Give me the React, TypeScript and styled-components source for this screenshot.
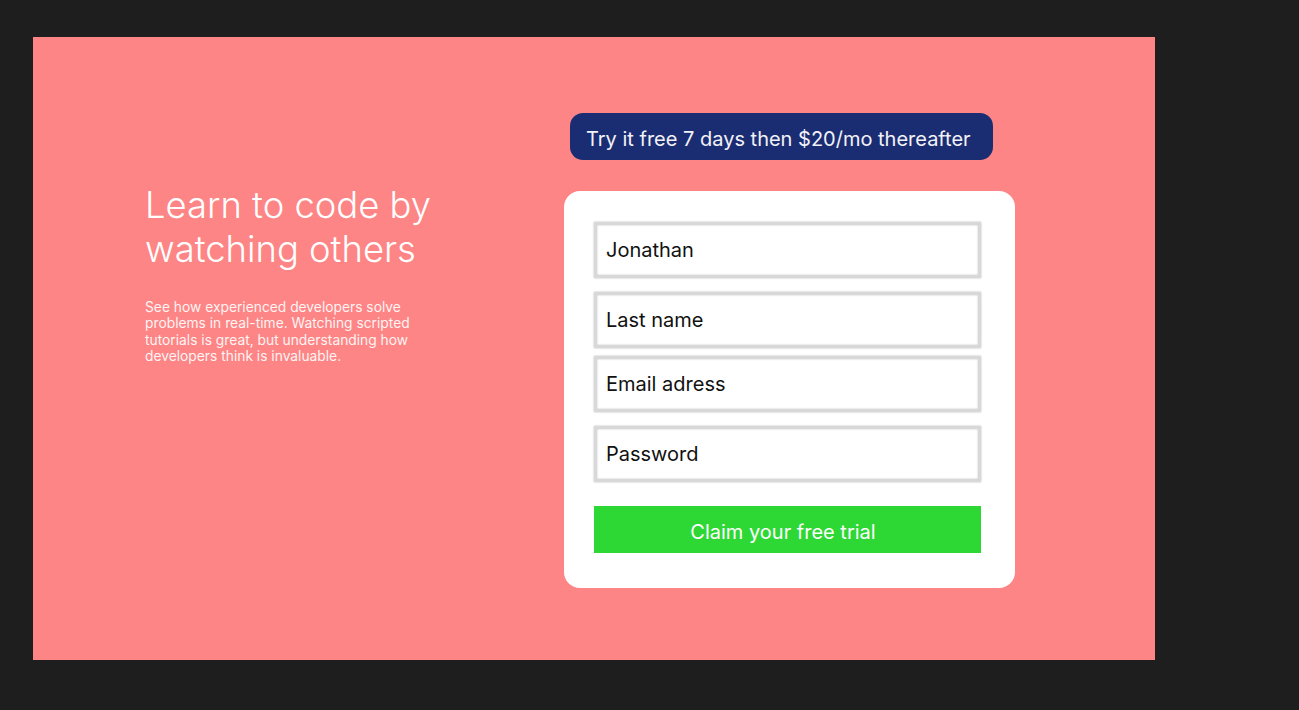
import styled, { createGlobalStyle } from 'styled-components';

const GlobalStyle = createGlobalStyle`
  html, body {
    margin: 0;
    padding: 0;
    background-color: #1e1e1e;
  }

  body {
    font-family: Inter, "Noto Sans", sans-serif;
  }

  * {
    box-sizing: border-box;
  }
`;

const Page = styled.div`
  min-height: 710px;
  padding: 37px 0 0 33px;
`;

const Frame = styled.main`
  width: 1122px;
  height: 623px;
  display: flex;
  flex-direction: row;
  gap: 119px;
  padding-left: 112px;
  background-color: #fd8585;
`;

const IntroDiv = styled.section`
  width: 300px;
  padding-top: 146px;
  display: flex;
  flex-direction: column;
  gap: 28px;
  color: #ffffff;
`;

const TitleH1 = styled.h1`
  margin: 0;
  font-size: 36.4px;
  font-weight: 300;
  line-height: 44px;
`;

const DescP = styled.p`
  margin: 0;
  width: 290px;
  font-size: 13.8px;
  line-height: 16.4px;
  color: #fff3f3;
`;

const SignupDiv = styled.section`
  display: flex;
  flex-direction: column;
  align-items: flex-start;
  padding-top: 76px;
  gap: 31px;
`;

const OfferBadge = styled.div`
  margin-left: 6px;
  height: 47px;
  padding: 5px 22px 0 16px;
  display: flex;
  align-items: center;
  border-radius: 13px;
  background-color: #1b2d72;
  color: #f2f2f7;
  font-size: 20px;
`;

const FormCard = styled.form`
  width: 451px;
  padding: 31px 34px 35px 30px;
  display: flex;
  flex-direction: column;
  border-radius: 16px;
  background-color: #ffffff;
`;

const TextInput = styled.input<{ $gap: number }>`
  width: 387px;
  height: 56px;
  margin-top: ${(p) => p.$gap}px;
  padding: 0 9px;
  border: 3px solid #d8d8d8;
  box-shadow: 0 0 2px #bdbdbd, inset 0 0 2px #bdbdbd;
  outline: none;
  font-family: Inter, "Noto Sans", sans-serif;
  font-size: 20px;
  color: #111111;
  background: #ffffff;

  &::placeholder {
    color: #111111;
    opacity: 1;
  }
`;

const ClaimButton = styled.button`
  width: 387px;
  height: 47px;
  margin-top: 24px;
  padding: 5px 9px 0 0;
  border: none;
  background-color: #2dd834;
  color: #ffffff;
  font-family: Inter, "Noto Sans", sans-serif;
  font-size: 20px;
  cursor: pointer;
`;

const App = () => {
  return (
    <Page>
      <GlobalStyle />
      <Frame>
        <IntroDiv>
          <TitleH1>
            Learn to code by
            <br />
            watching others
          </TitleH1>
          <DescP>
            See how experienced developers solve problems in real-time. Watching scripted
            tutorials is great, but understanding how developers think is invaluable.
          </DescP>
        </IntroDiv>

        <SignupDiv>
          <OfferBadge>Try it free 7 days then $20/mo thereafter</OfferBadge>
          <FormCard onSubmit={(e) => e.preventDefault()}>
            <TextInput $gap={0} type="text" defaultValue="Jonathan" />
            <TextInput $gap={14} type="text" placeholder="Last name" />
            <TextInput $gap={8} type="email" placeholder="Email adress" />
            <TextInput $gap={14} type="password" placeholder="Password" />
            <ClaimButton type="submit">Claim your free trial</ClaimButton>
          </FormCard>
        </SignupDiv>
      </Frame>
    </Page>
  );
};

export default App;
